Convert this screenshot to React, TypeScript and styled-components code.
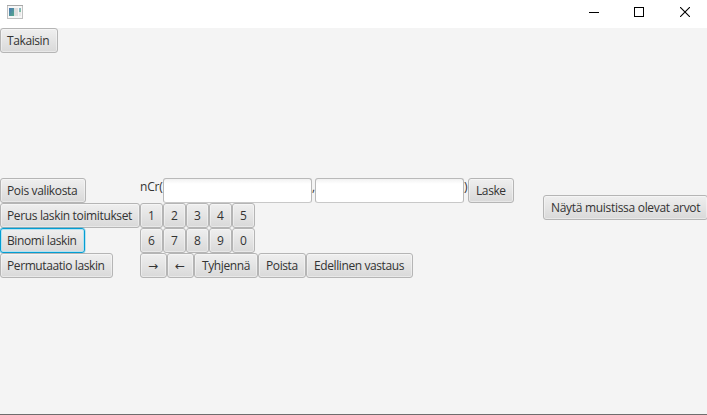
import React from 'react';
import styled, { createGlobalStyle } from 'styled-components';

const GlobalStyle = createGlobalStyle`
  * { box-sizing: border-box; }
  body { margin: 0; overflow: hidden; background: #f4f4f4; }
`;

const Window = styled.div`
  display: flex;
  flex-direction: column;
  width: 707px;
  height: 415px;
  overflow: hidden;
  background: #f4f4f4;
  border-bottom: 1px solid #6f6d6d;
  font-family: 'Open Sans', 'Noto Sans', sans-serif;
  font-size: 12px;
  color: #333;
`;

const TitleBar = styled.header`
  display: flex;
  flex: none;
  align-items: flex-start;
  justify-content: space-between;
  height: 28px;
  background: #fff;
`;

const AppIcon = styled.svg`
  display: block;
  margin: 5px 0 0 7px;
`;

const Caption = styled.div`
  display: flex;
  margin-right: -1px;
`;

const CaptionButton = styled.button`
  display: flex;
  width: 46px;
  height: 24px;
  padding: 0;
  border: 0;
  background: none;
  align-items: center;
  justify-content: center;
`;

const TopRegion = styled.div`
  flex: none;
  height: 150px;
`;

const Body = styled.main`
  display: flex;
  align-items: flex-start;
`;

const SideMenu = styled.nav`
  display: flex;
  flex: none;
  flex-direction: column;
  align-items: flex-start;
  width: 140px;
`;

const Calculator = styled.section`
  display: flex;
  flex: none;
  flex-direction: column;
  width: 403px;
`;

const Row = styled.div`
  display: flex;
  height: 25px;
`;

const MemoryRegion = styled.aside`
  flex: none;
  padding-top: 17px;
`;

const FxButton = styled.button<{ $w: number; $spacing?: number; $focused?: boolean; $inset?: number }>`
  display: flex;
  flex: none;
  align-items: center;
  justify-content: flex-start;
  width: ${(p) => p.$w}px;
  height: 25px;
  padding: 0 0 0 ${(p) => p.$inset ?? 7}px;
  border: 1px solid ${(p) => (p.$focused ? '#039ed3' : '#b5b5b5')};
  border-radius: 3px;
  background: linear-gradient(#efefef, #d9d9d9);
  box-shadow: ${(p) =>
    p.$focused
      ? '0 0 0 0.5px rgba(3, 158, 211, 0.45), inset 0 0 0 1px #b5e2f1'
      : 'inset 0 0 0 1px rgba(255, 255, 255, 0.4)'};
  color: #333;
  font: inherit;
  line-height: 16px;
  letter-spacing: ${(p) => p.$spacing ?? -0.4}px;
  white-space: nowrap;
`;

const ArrowButton = styled(FxButton)`
  font-family: 'DejaVu Sans', sans-serif;
`;

const FormulaText = styled.span<{ $w: number }>`
  flex: none;
  width: ${(p) => p.$w}px;
  height: 18px;
  line-height: 18px;
  letter-spacing: -0.2px;
  white-space: nowrap;
`;

const Field = styled.input`
  flex: none;
  width: 149px;
  height: 25px;
  padding: 0 7px;
  border: 1px solid #b9b9b9;
  border-bottom-color: #c8c8c8;
  border-radius: 3px;
  outline: none;
  background: linear-gradient(#f2f2f2, #fff 5px);
  font: inherit;
`;

export default function App() {
  return (
    <>
      <GlobalStyle />
      <Window>
        <TitleBar>
          <AppIcon width="16" height="14" viewBox="0 0 16 14">
            <defs>
              <linearGradient id="pane" x1="0" y1="0" x2="1" y2="1">
                <stop offset="0" stopColor="#4a76b4" />
                <stop offset="1" stopColor="#55a98a" />
              </linearGradient>
              <linearGradient id="thumb" x1="0" y1="0" x2="1" y2="1">
                <stop offset="0" stopColor="#8fb4d6" />
                <stop offset="1" stopColor="#7fc09a" />
              </linearGradient>
            </defs>
            <rect x="0.5" y="0.5" width="15" height="13" fill="#f7f7f7" stroke="#c0c0c0" />
            <path d="M0 .5h16" stroke="#a8a8a8" />
            <rect x="2" y="3" width="5" height="8" fill="url(#pane)" />
            <rect x="7" y="3" width="4" height="8" fill="#dedede" />
            <rect x="12" y="3" width="2" height="4" fill="url(#thumb)" />
            <rect x="12" y="7" width="2" height="4" fill="#e9e9e9" />
          </AppIcon>
          <Caption>
            <CaptionButton aria-label="Minimize">
              <svg width="12" height="10" viewBox="0 0 12 10" shapeRendering="crispEdges">
                <path d="M2 5.5h10" stroke="#000" />
              </svg>
            </CaptionButton>
            <CaptionButton aria-label="Maximize">
              <svg width="10" height="10" viewBox="0 0 10 10">
                <rect x=".5" y=".5" width="9" height="9" fill="none" stroke="#000" />
              </svg>
            </CaptionButton>
            <CaptionButton aria-label="Close">
              <svg width="10" height="10" viewBox="0 0 10 10">
                <path d="M0 0L10 10M10 0L0 10" stroke="#000" strokeWidth="1.1" />
              </svg>
            </CaptionButton>
          </Caption>
        </TitleBar>
        <TopRegion>
          <FxButton $w={58} $inset={6}>Takaisin</FxButton>
        </TopRegion>
        <Body>
          <SideMenu>
            <FxButton $w={86} $inset={6} $spacing={-0.35}>Pois valikosta</FxButton>
            <FxButton $w={140} $inset={6} $spacing={-0.36}>Perus laskin toimitukset</FxButton>
            <FxButton $w={85} $inset={6} $focused>Binomi laskin</FxButton>
            <FxButton $w={113} $inset={6}>Permutaatio laskin</FxButton>
          </SideMenu>
          <Calculator>
            <Row>
              <FormulaText $w={23}>nCr(</FormulaText>
              <Field />
              <FormulaText $w={3}>,</FormulaText>
              <Field />
              <FormulaText $w={4}>)</FormulaText>
              <FxButton $w={46}>Laske</FxButton>
            </Row>
            <Row>
              {['1', '2', '3', '4', '5'].map((d) => (
                <FxButton key={d} $w={23} $spacing={0}>{d}</FxButton>
              ))}
            </Row>
            <Row>
              {['6', '7', '8', '9', '0'].map((d) => (
                <FxButton key={d} $w={23} $spacing={0}>{d}</FxButton>
              ))}
            </Row>
            <Row>
              <ArrowButton $w={27} $spacing={0}>→</ArrowButton>
              <ArrowButton $w={27} $spacing={0}>←</ArrowButton>
              <FxButton $w={64}>Tyhjennä</FxButton>
              <FxButton $w={48}>Poista</FxButton>
              <FxButton $w={107}>Edellinen vastaus</FxButton>
            </Row>
          </Calculator>
          <MemoryRegion>
            <FxButton $w={165} $spacing={-0.3}>Näytä muistissa olevat arvot</FxButton>
          </MemoryRegion>
        </Body>
      </Window>
    </>
  );
}
